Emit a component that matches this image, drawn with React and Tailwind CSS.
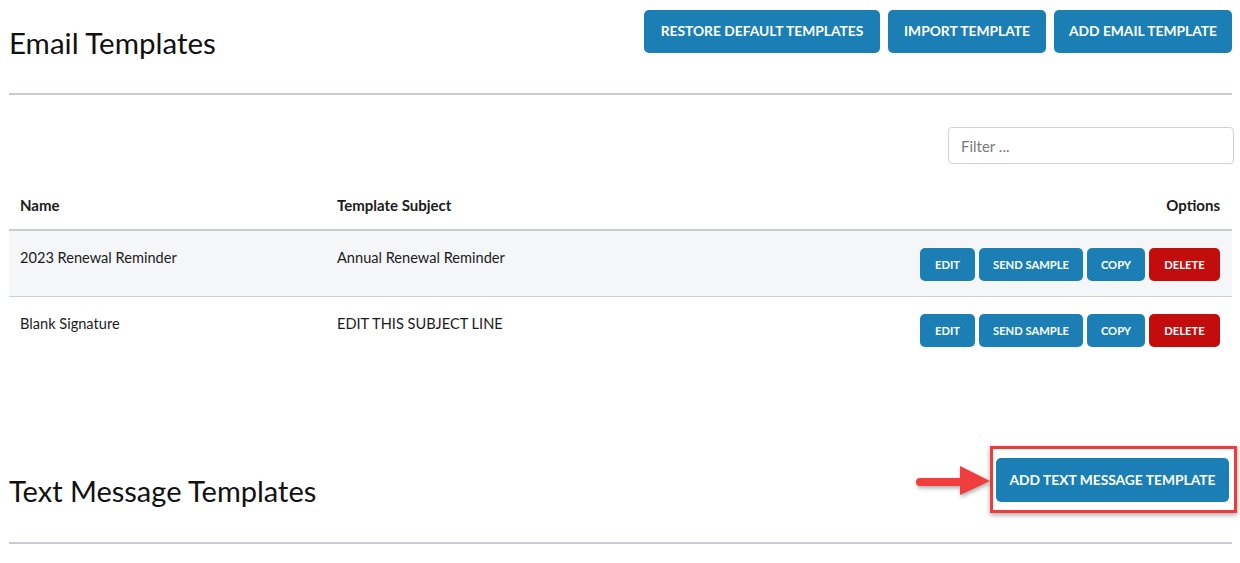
export default function App() {
  const rows = [
    { name: "2023 Renewal Reminder", subject: "Annual Renewal Reminder", shaded: true },
    { name: "Blank Signature", subject: "EDIT THIS SUBJECT LINE", shaded: false },
  ];

  return (
    <div className="min-h-screen bg-white pl-[9px] pr-[8px] text-[#1b1b1b]" style={{ fontFamily: "Lato, 'Open Sans', sans-serif" }}>
      {/* email header */}
      <div className="flex items-start justify-between border-b-2 border-[#c9ccd0] pt-[10px] pb-[33px]">
        <h1 className="mt-[16px] text-[29.5px] leading-[34px] font-normal text-[#111]">Email Templates</h1>
        <div className="flex gap-2">
          <button className="h-[43px] w-[236px] rounded-[5px] bg-[#1b7fb5] text-[13.8px] font-bold text-white">RESTORE DEFAULT TEMPLATES</button>
          <button className="h-[43px] w-[158px] rounded-[5px] bg-[#1b7fb5] text-[13.8px] font-bold text-white">IMPORT TEMPLATE</button>
          <button className="h-[43px] w-[178px] rounded-[5px] bg-[#1b7fb5] text-[13.8px] font-bold text-white">ADD EMAIL TEMPLATE</button>
        </div>
      </div>

      <div className="mt-[32px] flex justify-end">
        <input
          placeholder="Filter ..."
          className="mr-[-2px] h-[37px] w-[286px] rounded-[4px] border border-[#cfd2d6] px-[12px] text-[15px] text-[#333] placeholder:text-[#7a7a7a] outline-none"
        />
      </div>

      {/* table */}
      <div className="flex border-b-2 border-[#c9ccd0] pt-[31px] pb-[14px] text-[15px] leading-[20px] font-bold">
        <div className="w-[317px] px-[11px]">Name</div>
        <div className="flex-1 px-[11px]">Template Subject</div>
        <div className="pr-[12px]">Options</div>
      </div>
      {rows.map((r, i) => (
        <div
          key={r.name}
          className={"flex items-start pt-[17px] pb-[15px] text-[14.6px] leading-[20px] " + (r.shaded ? "bg-[#f5f6f8] " : "") + (i === 0 ? "border-b border-[#cdd1d6]" : "")}
        >
          <div className="w-[317px] px-[11px]">{r.name}</div>
          <div className="flex-1 px-[11px]">{r.subject}</div>
          <div className="flex gap-[4px] pr-[12px] text-[11.2px] font-bold text-white">
            <button className="h-[33px] w-[55px] rounded-[5px] bg-[#1b7fb5]">EDIT</button>
            <button className="h-[33px] w-[104px] rounded-[5px] bg-[#1b7fb5]">SEND SAMPLE</button>
            <button className="h-[33px] w-[58px] rounded-[5px] bg-[#1b7fb5]">COPY</button>
            <button className="h-[33px] w-[71px] rounded-[5px] bg-[#c30c0c]">DELETE</button>
          </div>
        </div>
      ))}

      {/* text message header */}
      <div className="mt-[84px] flex items-start justify-between border-b-2 border-[#c9ccd0] pb-[29px]">
        <h2 className="mt-[28px] text-[29px] leading-[34px] font-normal text-[#111]">Text Message Templates</h2>
        <div className="mr-[-5px] flex items-center">
          <svg width="76" height="44" viewBox="0 0 76 44" className="mt-[4px]" style={{ filter: "drop-shadow(1px 2px 2px rgba(0,0,0,0.35))" }}>
            <line x1="6" y1="22" x2="50" y2="22" stroke="#f03e3e" strokeWidth="8" strokeLinecap="round" />
            <polygon points="46,6 76,21 46,35" fill="#f03e3e" />
          </svg>
          <div className="border-[3px] border-[#ee3b3b] pt-[9px] pb-[8px] pl-[3px] pr-[5px] shadow-[0_2px_5px_rgba(0,0,0,0.35)]">
            <button className="h-[44px] w-[233px] rounded-[5px] bg-[#1b7fb5] text-[13.8px] font-bold text-white">ADD TEXT MESSAGE TEMPLATE</button>
          </div>
        </div>
      </div>
    </div>
  );
}
